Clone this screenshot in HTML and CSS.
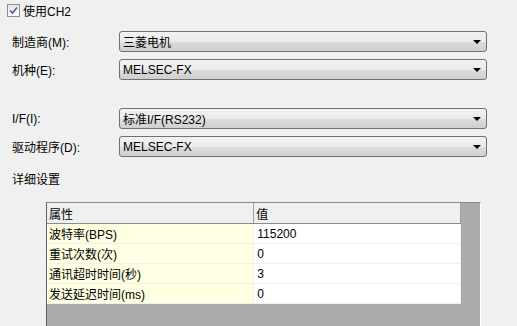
FILE: index.html
```html
<!DOCTYPE html>
<html>
<head>
	<title>通讯设置</title>
	<link rel="stylesheet" href="styles.css">
</head>
<body>
	<div class="check-row">
		<span class="checkbox">
			<svg width="9" height="9" viewBox="0 0 9 9"><path d="M1 4.5 L3.5 7 L8 1.5" fill="none" stroke="#4a5f97" stroke-width="1.6"/></svg>
		</span>
		<span>使用CH2</span>
	</div>

	<div class="group">
		<div class="field">
			<div class="label">制造商(M):</div>
			<div class="combo"><span>三菱电机</span><i class="arrow"></i></div>
		</div>
		<div class="field">
			<div class="label">机种(E):</div>
			<div class="combo"><span>MELSEC-FX</span><i class="arrow"></i></div>
		</div>
	</div>

	<div class="group second">
		<div class="field">
			<div class="label">I/F(I):</div>
			<div class="combo"><span>标准I/F(RS232)</span><i class="arrow"></i></div>
		</div>
		<div class="field">
			<div class="label">驱动程序(D):</div>
			<div class="combo"><span>MELSEC-FX</span><i class="arrow"></i></div>
		</div>
	</div>

	<div class="section-title">详细设置</div>

	<div class="grid">
		<table class="props">
			<tr>
				<th>属性</th>
				<th>值</th>
			</tr>
			<tr>
				<td class="name">波特率(BPS)</td>
				<td>115200</td>
			</tr>
			<tr>
				<td class="name">重试次数(次)</td>
				<td>0</td>
			</tr>
			<tr>
				<td class="name">通讯超时时间(秒)</td>
				<td>3</td>
			</tr>
			<tr>
				<td class="name">发送延迟时间(ms)</td>
				<td>0</td>
			</tr>
		</table>
	</div>
</body>
</html>
```

FILE: styles.css
```css
body{
	margin: 0;
	background: #f0f0f0;
	font-family: "Liberation Sans", "Noto Sans CJK SC", sans-serif;
	font-size: 12px;
	color: #000;
	height: 326px;
	overflow: hidden;
}
.check-row{
	display: flex;
	align-items: center;
	gap: 3px;
	padding: 4px 0 0 7px;
	height: 13px;
}
.checkbox{
	width: 11px;
	height: 11px;
	border: 1px solid #8e8f8f;
	background: linear-gradient(#e6e6e6, #fdfdfd);
	display: flex;
	align-items: center;
	justify-content: center;
}
.group{
	margin-top: 14px;
	display: flex;
	flex-direction: column;
	gap: 7px;
}
.group.second{
	margin-top: 28px;
}
.field{
	display: flex;
	align-items: center;
}
.label{
	width: 107px;
	padding-left: 12px;
}
.combo{
	width: 358px;
	height: 19px;
	border: 1px solid #707070;
	border-radius: 3px;
	background: linear-gradient(#f2f2f2 0%, #ebebeb 50%, #dddddd 51%, #cfcfcf 100%);
	display: flex;
	align-items: center;
	justify-content: space-between;
	padding: 0 5px 0 3px;
	box-sizing: content-box;
}
.arrow{
	width: 0;
	height: 0;
	border-left: 4px solid transparent;
	border-right: 4px solid transparent;
	border-top: 4px solid #000;
}
.section-title{
	margin-top: 17px;
	padding-left: 12px;
	height: 12px;
	line-height: 12px;
}
.grid{
	margin: 16px 0 0 46px;
	width: 433px;
	height: 130px;
	background: #ababab;
	border-top: 1px solid #8a8a8a;
	border-left: 1px solid #646464;
	border-right: 1px solid #fff;
}
.props{
	width: 414px;
	border-collapse: collapse;
	table-layout: fixed;
	border-right: 1px solid #808080;
	border-bottom: 1px solid #808080;
	background: #fff;
}
.props th{
	background: #f0f0f0;
	font-weight: normal;
	text-align: left;
	height: 20px;
	padding: 0 2px;
	border-bottom: 1px solid #8c8c8c;
	border-right: 1px solid #a0a0a0;
}
.props td{
	height: 19px;
	padding: 0 3px;
	border-bottom: 1px solid #f0f0f0;
	border-right: 1px solid #f0f0f0;
}
.props td.name{
	background: #ffffe1;
	padding-left: 2px;
}
```
